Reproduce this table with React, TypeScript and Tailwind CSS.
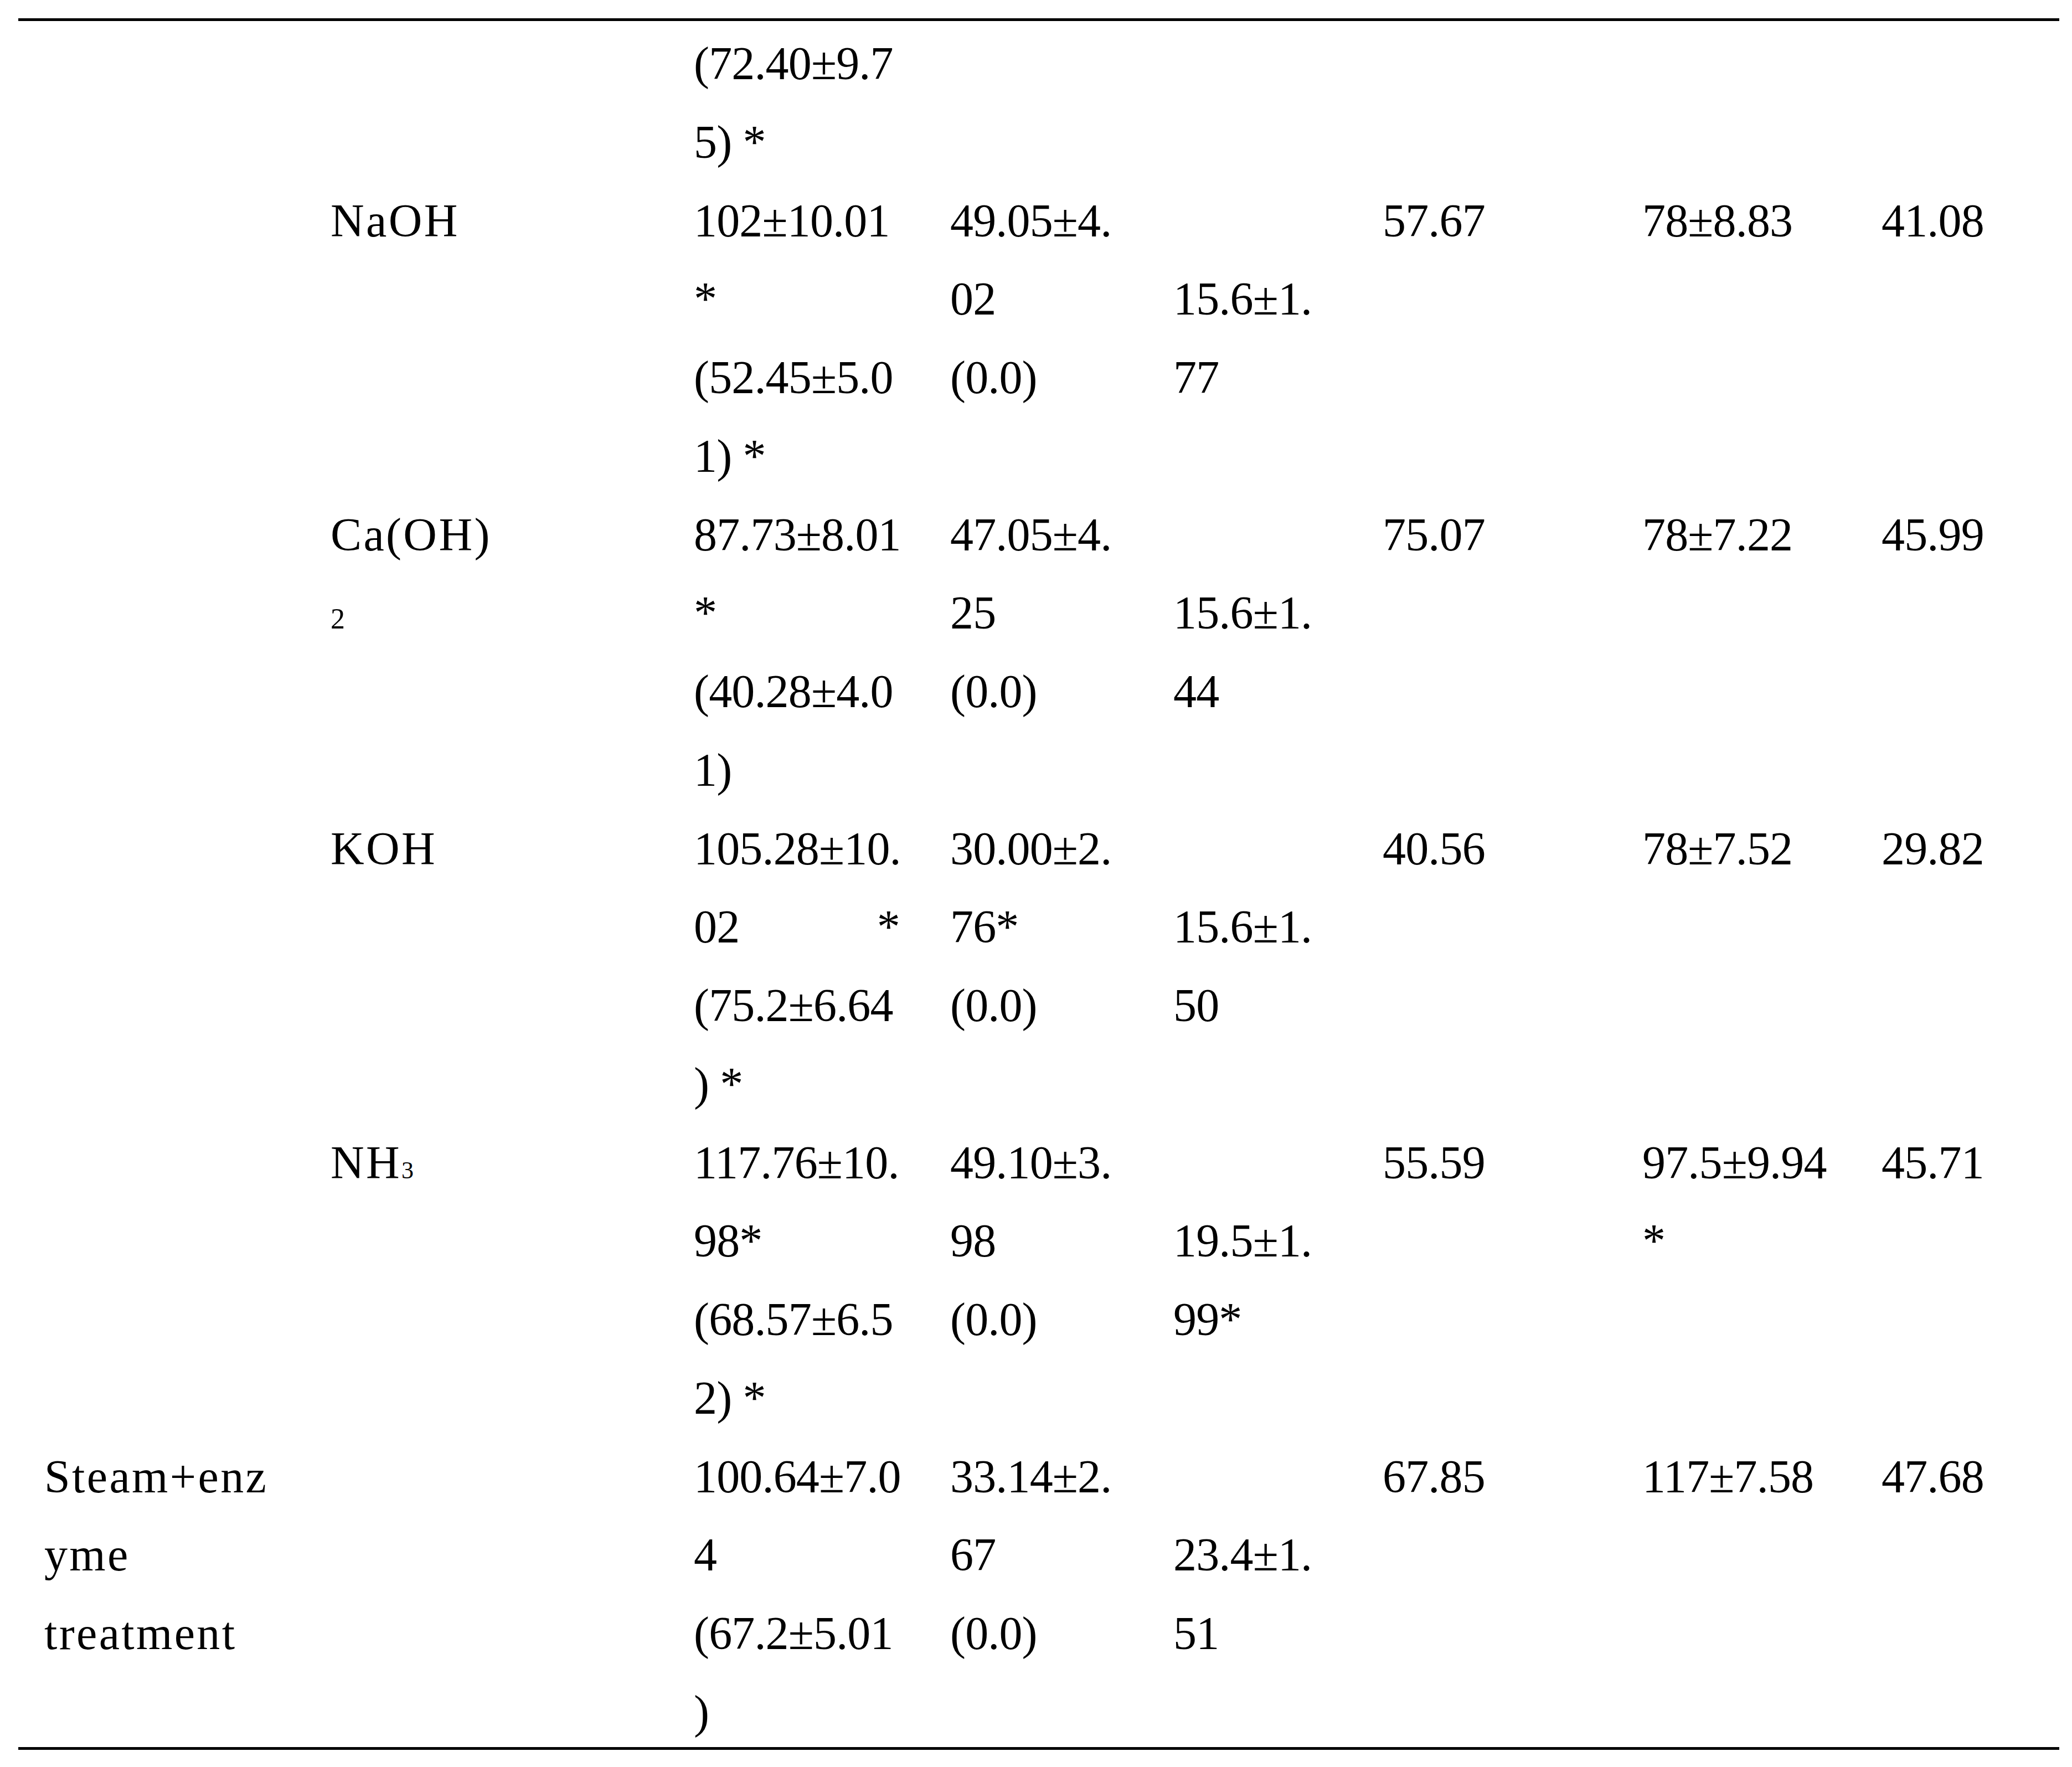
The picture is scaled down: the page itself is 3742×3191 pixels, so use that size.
import type { ReactNode } from "react"

type Cell = ReactNode[] | null

interface Row {
  cells: Cell[]
  center?: number[]
}

const rows: Row[] = [
  {
    cells: [null, null, ["(72.40±9.7", "5) *"], null, null, null, null, null],
  },
  {
    cells: [
      null,
      ["NaOH"],
      ["102±10.01", "*", "(52.45±5.0", "1) *"],
      ["49.05±4.", "02", "(0.0)"],
      ["15.6±1.", "77"],
      ["57.67"],
      ["78±8.83"],
      ["41.08"],
    ],
    center: [4],
  },
  {
    cells: [
      null,
      ["Ca(OH)", <span className="text-[52px]">2</span>],
      ["87.73±8.01", "*", "(40.28±4.0", "1)"],
      ["47.05±4.", "25", "(0.0)"],
      ["15.6±1.", "44"],
      ["75.07"],
      ["78±7.22"],
      ["45.99"],
    ],
    center: [4],
  },
  {
    cells: [
      null,
      ["KOH"],
      [
        "105.28±10.",
        <span className="flex w-[372px] justify-between">
          <span>02</span>
          <span>*</span>
        </span>,
        "(75.2±6.64",
        ") *",
      ],
      ["30.00±2.", "76*", "(0.0)"],
      ["15.6±1.", "50"],
      ["40.56"],
      ["78±7.52"],
      ["29.82"],
    ],
    center: [4],
  },
  {
    cells: [
      null,
      [
        <>
          NH<span className="text-[44px]">3</span>
        </>,
      ],
      ["117.76±10.", "98*", "(68.57±6.5", "2) *"],
      ["49.10±3.", "98", "(0.0)"],
      ["19.5±1.", "99*"],
      ["55.59"],
      ["97.5±9.94", "*"],
      ["45.71"],
    ],
    center: [4],
  },
  {
    cells: [
      ["Steam+enz", "yme", "treatment"],
      null,
      ["100.64±7.0", "4", "(67.2±5.01", ")"],
      ["33.14±2.", "67", "(0.0)"],
      ["23.4±1.", "51"],
      ["67.85"],
      ["117±7.58"],
      ["47.68"],
    ],
    center: [4],
  },
]

function cellClass(ci: number, centered: boolean) {
  let cls = centered ? "self-center" : "self-start"
  if (ci === 0) cls += " pl-[47px] tracking-[0.04em]"
  else if (ci === 1) cls += " tracking-[0.04em]"
  else cls += " tracking-[-0.01em]"
  return cls
}

export default function App() {
  return (
    <div className="min-h-screen bg-white pl-[33px] pt-[33px] text-black font-['Liberation_Serif',serif]">
      <div className="w-[3686px]">
        <div className="h-[5px] bg-black" />
        <div className="h-[3117px] pt-[6px] text-[84px] leading-[141.75px]">
          {rows.map((row, ri) => (
            <div
              key={ri}
              className="grid grid-cols-[564px_656px_463px_403px_378px_469px_432px_321px]"
            >
              {row.cells.map((cell, ci) => (
                <div key={ci} className={cellClass(ci, !!row.center?.includes(ci))}>
                  {cell?.map((line, li) => (
                    <div key={li} className="whitespace-nowrap">
                      {line}
                    </div>
                  ))}
                </div>
              ))}
            </div>
          ))}
        </div>
        <div className="h-[5px] bg-black" />
      </div>
    </div>
  )
}
